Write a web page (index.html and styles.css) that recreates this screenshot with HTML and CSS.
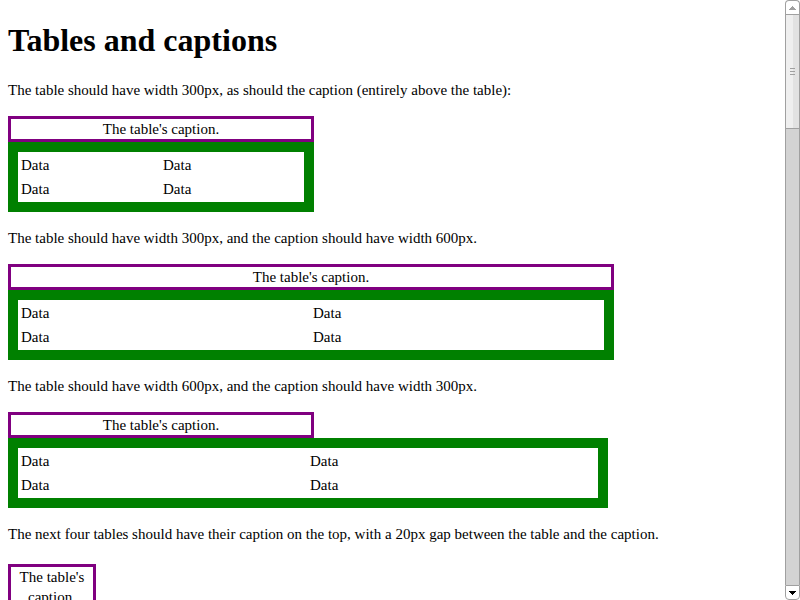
FILE: index.html
```html
<!DOCTYPE html>
<html lang="en">
<head>
<meta charset="utf-8">
<title>Tables and captions</title>
<link rel="stylesheet" href="styles.css">
</head>
<body>
<main class="content">
  <h1>Tables and captions</h1>

  <p>The table should have width 300px, as should the caption (entirely above the table):</p>
  <table class="narrow">
    <caption>The table's caption.</caption>
    <tr><td>Data</td><td>Data</td></tr>
    <tr><td>Data</td><td>Data</td></tr>
  </table>

  <p>The table should have width 300px, and the caption should have width 600px.</p>
  <table class="stretched">
    <caption>The table's caption.</caption>
    <tr><td>Data</td><td>Data</td></tr>
    <tr><td>Data</td><td>Data</td></tr>
  </table>

  <p>The table should have width 600px, and the caption should have width 300px.</p>
  <table class="wide">
    <caption class="short">The table's caption.</caption>
    <tr><td>Data</td><td>Data</td></tr>
    <tr><td>Data</td><td>Data</td></tr>
  </table>

  <p>The next four tables should have their caption on the top, with a 20px gap between the table and the caption.</p>
  <table class="spaced">
    <caption>The table's caption.</caption>
    <tr><td>Data</td><td>Data</td></tr>
    <tr><td>Data</td><td>Data</td></tr>
  </table>
</main>
<div class="scrollbar" aria-hidden="true">
  <div class="arrow up">
    <svg width="13" height="13" viewBox="0 0 13 13" shape-rendering="crispEdges"><path fill="#a0a0a0" d="M6 5h1v1h1v1h1v1h1v1H3V8h1V7h1V6h1z"/></svg>
  </div>
  <div class="thumb">
    <svg width="5" height="7" viewBox="0 0 5 7" shape-rendering="crispEdges"><path fill="#a0a0a0" d="M0 0h5v1H0zM0 3h5v1H0zM0 6h5v1H0z"/></svg>
  </div>
  <div class="track"></div>
  <div class="arrow down">
    <svg width="13" height="13" viewBox="0 0 13 13" shape-rendering="crispEdges"><path fill="#000" d="M3 5h7v1H9v1H8v1H7v1H6V8H5V7H4V6H3z"/></svg>
  </div>
</div>
</body>
</html>
```
FILE: styles.css
```css
body {
  display: flex;
  height: 100vh;
  margin: 0;
  overflow: hidden;
  background: #fff;
  color: #000;
  font: 15px/20px "Liberation Serif", "Times New Roman", serif;
}

.content {
  flex: 1;
  min-width: 0;
  padding: 0 8px;
  overflow: hidden;
}

h1 {
  margin: 21px 0;
  font-size: 32px;
  line-height: 38px;
}

p {
  margin: 16px 0;
}

table {
  border: 10px solid green;
  border-spacing: 2px;
  font-size: 15px;
}

caption {
  border: 3px solid purple;
}

td {
  padding: 1px;
}

.narrow {
  width: 306px;
}

.stretched {
  width: 606px;
}

.wide {
  width: 600px;
}

.short {
  width: 300px;
}

.spaced {
  width: 88px;
  margin-top: 20px;
}

.spaced caption {
  margin-bottom: 20px;
}

.scrollbar {
  display: flex;
  flex-direction: column;
  flex: none;
  width: 15px;
}

.arrow,
.thumb,
.track {
  box-sizing: border-box;
  border: 1px solid #a0a0a0;
}

.arrow {
  flex: none;
  height: 15px;
  background: #fff;
}

.arrow svg {
  display: block;
}

.up {
  height: 14px;
  border-bottom: 0;
  border-radius: 4px 4px 0 0;
}

.down {
  border-radius: 0 0 4px 4px;
}

.thumb {
  display: flex;
  align-items: center;
  justify-content: center;
  flex: none;
  height: 115px;
  background: linear-gradient(to right, #efefef 7px, #e2e2e2 7px);
}

.track {
  flex: 1;
  border-width: 0 1px;
  background: #d3d3d3;
}
```
